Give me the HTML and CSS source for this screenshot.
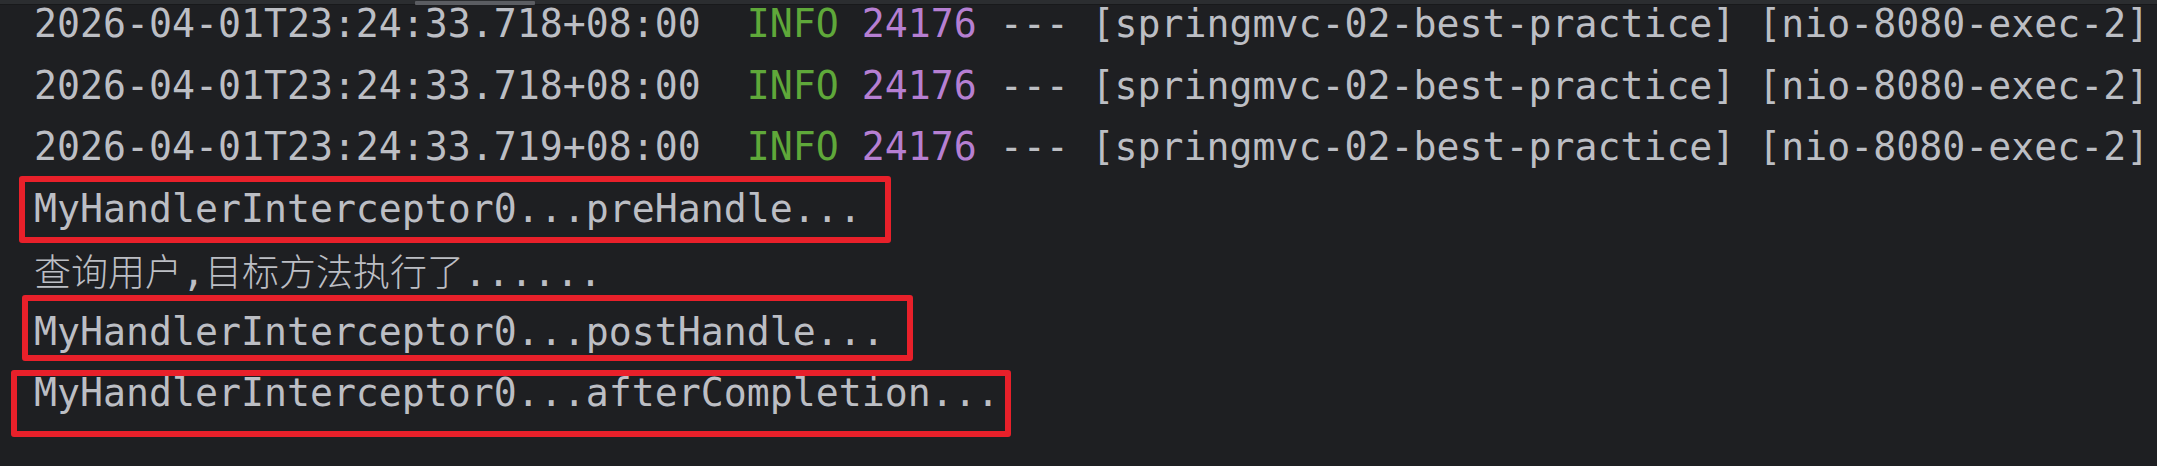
FILE: index.html
```html
<!DOCTYPE html>
<html lang="zh-CN">
<head>
<meta charset="utf-8">
<title>Console</title>
<link rel="stylesheet" href="styles.css">
</head>
<body>
<div class="console">
  <div class="topbar"><div class="thumb"></div></div>
  <div class="log">
    <div class="line">2026-04-01T23:24:33.718+08:00  <span class="info">INFO</span> <span class="pid">24176</span> --- [springmvc-02-best-practice] [nio-8080-exec-2]</div>
    <div class="line">2026-04-01T23:24:33.718+08:00  <span class="info">INFO</span> <span class="pid">24176</span> --- [springmvc-02-best-practice] [nio-8080-exec-2]</div>
    <div class="line">2026-04-01T23:24:33.719+08:00  <span class="info">INFO</span> <span class="pid">24176</span> --- [springmvc-02-best-practice] [nio-8080-exec-2]</div>
    <div class="line">MyHandlerInterceptor0...preHandle...</div>
    <div class="line"><span class="cjk">查询用户</span>,<span class="cjk">目标方法执行了</span>......</div>
    <div class="line">MyHandlerInterceptor0...postHandle...</div>
    <div class="line">MyHandlerInterceptor0...afterCompletion...</div>
  </div>
  <div class="mark mark-pre"></div>
  <div class="mark mark-post"></div>
  <div class="mark mark-after"></div>
</div>
</body>
</html>
```
FILE: styles.css
```css
html, body {
  margin: 0;
  padding: 0;
  background: #1e1f22;
  overflow: hidden;
}
.console {
  position: relative;
  width: 2157px;
  height: 466px;
  background: #1e1f22;
  overflow: hidden;
}
.topbar {
  height: 4px;
  background: #2b2d30;
  border-bottom: 1px solid #18191b;
  position: relative;
  z-index: 1;
}
.thumb {
  position: absolute;
  left: 415px;
  top: 1px;
  width: 120px;
  height: 4px;
  background: #5b5d62;
  border-radius: 1px;
}
.log {
  margin-top: -11px;
  padding-left: 34px;
  font-family: "DejaVu Sans Mono", "Noto Sans CJK SC", monospace;
  font-size: 38.2px;
  line-height: 61.5px;
  color: #bcbec4;
}
.line {
  white-space: pre;
  height: 61.5px;
}
.cjk {
  font-family: "Noto Sans CJK SC", sans-serif;
  font-size: 37px;
  font-weight: 300;
}
.info { color: #5fa83a; }
.pid { color: #b67fd2; }
.mark {
  position: absolute;
  border: 6px solid #e8202a;
  border-radius: 3px;
  box-sizing: border-box;
}
.mark-pre { left: 19px; top: 176px; width: 872px; height: 67px; }
.mark-post { left: 22px; top: 295px; width: 891px; height: 66px; }
.mark-after { left: 11px; top: 370px; width: 1000px; height: 67px; }
```
